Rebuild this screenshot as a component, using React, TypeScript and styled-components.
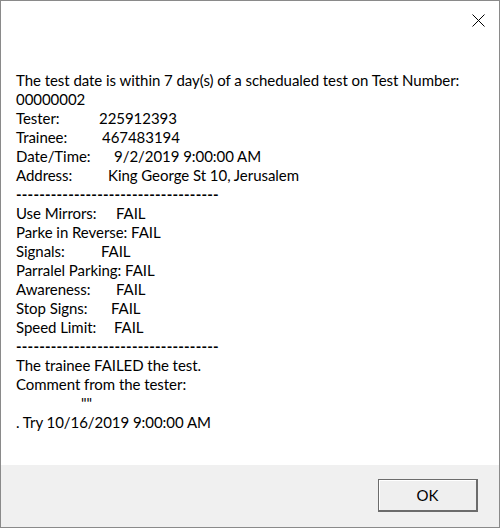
import React from "react";
import styled, { createGlobalStyle } from "styled-components";

const Global = createGlobalStyle`
  html, body { margin: 0; padding: 0; background: #ffffff; }
  * { box-sizing: border-box; }
`;

const Dialog = styled.div`
  width: 500px;
  height: 528px;
  border: 1px solid #8a8a8a;
  background: #ffffff;
  display: flex;
  flex-direction: column;
  font-family: Lato, "Segoe UI", "Noto Sans", sans-serif;
  font-size: 15px;
  letter-spacing: -0.05px;
  color: #000000;
`;

const TitleBar = styled.div`
  height: 44px;
  display: flex;
  justify-content: flex-end;
  align-items: flex-start;
  padding: 12px 14px 0 0;
`;

const CloseButton = styled.button`
  width: 14px;
  height: 14px;
  padding: 0;
  border: none;
  background: transparent;
  display: flex;
  align-items: center;
  justify-content: center;
`;

const Body = styled.div`
  flex: 1;
  padding: 26px 0 0 15px;
  display: flex;
  flex-direction: column;
  align-items: flex-start;
`;

const Line = styled.div`
  height: 19px;
  line-height: 19px;
  white-space: pre;
`;

const Label = styled.span<{ $w: number }>`
  display: inline-block;
  width: ${(p) => p.$w}px;
`;

const Rule = styled.div`
  height: 19px;
  line-height: 19px;
  white-space: nowrap;
  letter-spacing: 0.2px;
  font-weight: 700;
`;

const Footer = styled.div`
  height: 62px;
  background: #f0f0f0;
  display: flex;
  justify-content: flex-end;
  align-items: flex-start;
  padding: 14px 21px 0 0;
`;

const OkButton = styled.button`
  width: 100px;
  height: 33px;
  background: #efefef;
  border-style: solid;
  border-color: #6c6c6c;
  border-width: 1px 2px 2px 1px;
  box-shadow: inset 1px 1px 0 #ffffff;
  font-family: inherit;
  font-size: 15px;
  color: #000000;
  padding: 0 0 1px 0;
`;

const dashes = "-".repeat(35);

type Field = { label: string; value: string; x: number };

const fields: Field[] = [
  { label: "Tester:", value: "225912393", x: 98 },
  { label: "Trainee:", value: "467483194", x: 101 },
  { label: "Date/Time:", value: "9/2/2019 9:00:00 AM", x: 113 },
  { label: "Address:", value: "King George St 10, Jerusalem", x: 107 },
];

const results: Field[] = [
  { label: "Use Mirrors:", value: "FAIL", x: 115 },
  { label: "Parke in Reverse:", value: "FAIL", x: 0 },
  { label: "Signals:", value: "FAIL", x: 100 },
  { label: "Parralel Parking:", value: "FAIL", x: 0 },
  { label: "Awareness:", value: "FAIL", x: 115 },
  { label: "Stop Signs:", value: "FAIL", x: 110 },
  { label: "Speed Limit:", value: "FAIL", x: 113 },
];

const FieldLine = ({ f }: { f: Field }) =>
  f.x === 0 ? (
    <Line>
      {f.label} {f.value}
    </Line>
  ) : (
    <Line>
      <Label $w={f.x - 15}>{f.label}</Label>
      {f.value}
    </Line>
  );

export default function App() {
  return (
    <>
      <Global />
      <Dialog>
        <TitleBar>
          <CloseButton aria-label="Close">
            <svg width="13" height="13" viewBox="0 0 13 13">
              <path d="M0.5 0.5 L12.5 12.5 M12.5 0.5 L0.5 12.5" stroke="#000" strokeWidth="1" fill="none" />
            </svg>
          </CloseButton>
        </TitleBar>
        <Body>
          <Line>The test date is within 7 day(s) of a schedualed test on Test Number:</Line>
          <Line>00000002</Line>
          {fields.map((f) => (
            <FieldLine key={f.label} f={f} />
          ))}
          <Rule>{dashes}</Rule>
          {results.map((f) => (
            <FieldLine key={f.label} f={f} />
          ))}
          <Rule>{dashes}</Rule>
          <Line>The trainee FAILED the test.</Line>
          <Line>Comment from the tester:</Line>
          <Line>
            <Label $w={65} />""
          </Line>
          <Line>. Try 10/16/2019 9:00:00 AM</Line>
        </Body>
        <Footer>
          <OkButton>OK</OkButton>
        </Footer>
      </Dialog>
    </>
  );
}
